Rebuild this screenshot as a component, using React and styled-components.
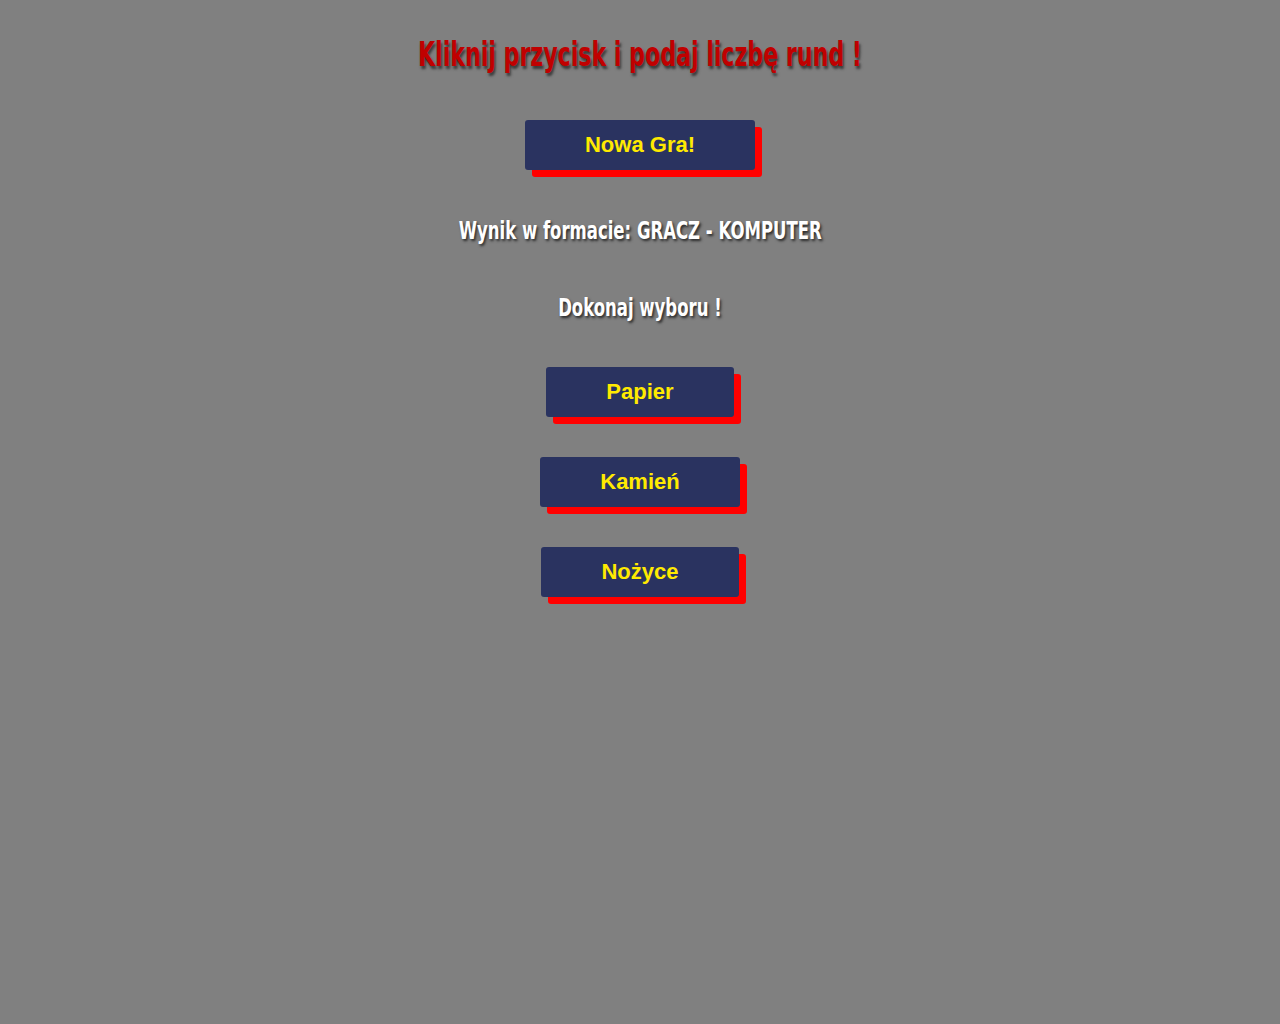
import React from "react";
import styled, { createGlobalStyle } from "styled-components";

const Global = createGlobalStyle`
  html, body {
    margin: 0;
    padding: 0;
    background: #808080;
    min-height: 100%;
  }
  body {
    font-family: "Liberation Sans", Arial, sans-serif;
  }
`;

const Page = styled.main`
  display: flex;
  flex-direction: column;
  align-items: center;
  padding-top: 35px;
  min-height: 1024px;
  box-sizing: border-box;
`;

const Title = styled.h1`
  margin: 0;
  height: 40px;
  line-height: 40px;
  white-space: nowrap;
  font-family: "DejaVu Sans Condensed", "DejaVu Sans", sans-serif;
  font-stretch: condensed;
  font-weight: 700;
  font-size: 33px;
  color: #c00000;
  text-shadow: 2px 3px 3px #3a3a3a;
  transform: scaleX(0.745);
`;

const Info = styled.h2`
  margin: ${(p) => p.$top}px 0 0;
  height: 30px;
  line-height: 30px;
  white-space: nowrap;
  font-family: "DejaVu Sans Condensed", "DejaVu Sans", sans-serif;
  font-stretch: condensed;
  font-weight: 700;
  font-size: 24px;
  color: #ffffff;
  text-shadow: 2px 2px 3px #2a2a2a;
  transform: scaleX(0.765);
`;

const Button = styled.button`
  margin-top: ${(p) => p.$top}px;
  height: 50px;
  padding: 0 60px;
  border: none;
  border-radius: 3px;
  background: #2a3360;
  color: #ffea00;
  font-family: "Liberation Sans", Arial, sans-serif;
  font-weight: 700;
  font-size: 22px;
  box-shadow: 7px 7px 0 #ff0000;
  cursor: pointer;
`;

export default function App() {
  return (
    <>
      <Global />
      <Page>
        <Title>Kliknij przycisk i podaj liczbę rund !</Title>
        <Button $top={45}>Nowa Gra!</Button>
        <Info $top={46}>Wynik w formacie: GRACZ - KOMPUTER</Info>
        <Info $top={47}>Dokonaj wyboru !</Info>
        <Button $top={44}>Papier</Button>
        <Button $top={40}>Kamień</Button>
        <Button $top={40}>Nożyce</Button>
      </Page>
    </>
  );
}
